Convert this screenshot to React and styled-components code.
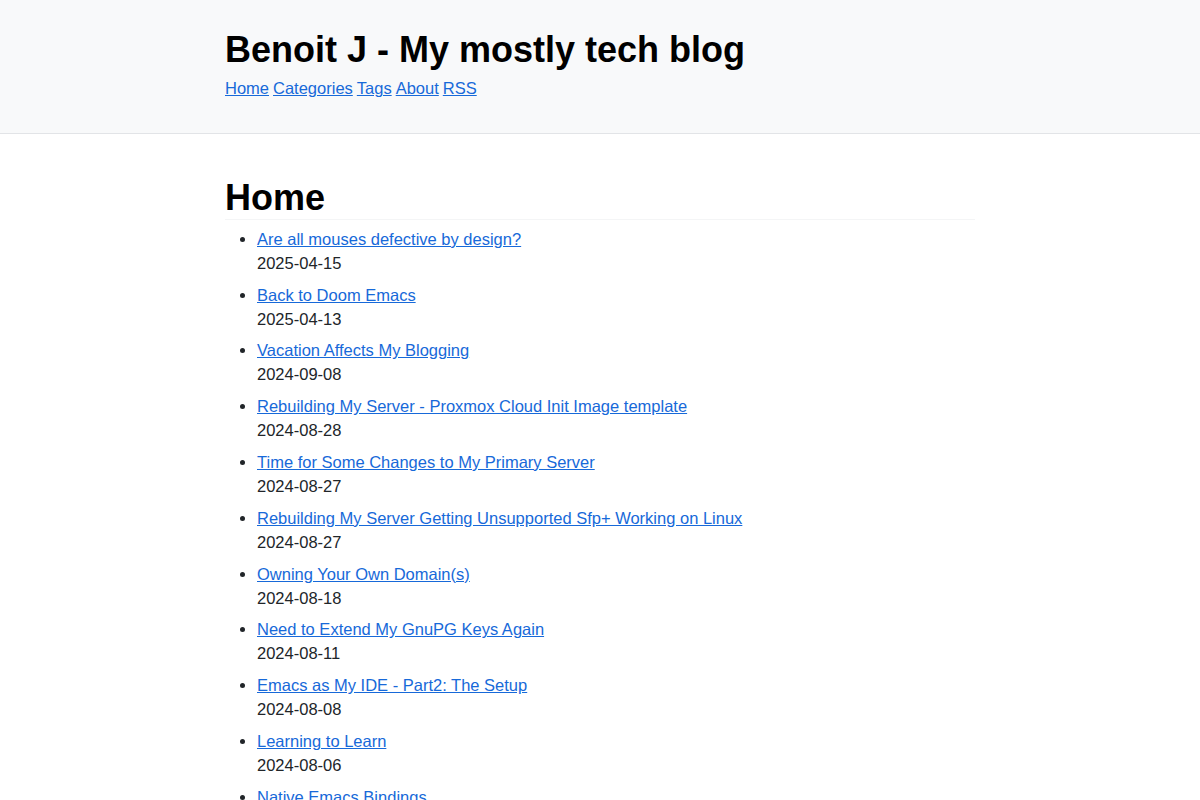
import React from "react";
import styled, { createGlobalStyle } from "styled-components";

const Global = createGlobalStyle`
  html, body { margin: 0; padding: 0; background: #fff; }
  body {
    font-family: "Liberation Sans", Arial, sans-serif;
    font-size: 16.5px;
    line-height: 24px;
    color: #212529;
  }
`;

const Header = styled.header`
  background: #f8f9fa;
  border-bottom: 1px solid #e2e4e7;
  padding: 29px 0 33px;
`;

const Container = styled.div`
  width: 750px;
  margin: 0 auto;
`;

const SiteTitle = styled.h1`
  margin: 0;
  font-size: 36px;
  line-height: 1.15;
  font-weight: 700;
  color: #000;
`;

const Nav = styled.nav`
  margin-top: 6px;
  display: flex;
  gap: 4px;
`;

const Link = styled.a`
  color: #1769d9;
  text-decoration: underline;
`;

const Main = styled.main`
  padding-top: 43px;
`;

const PageTitle = styled.h2`
  margin: 0;
  font-size: 36px;
  line-height: 1.15;
  font-weight: 700;
  color: #000;
  padding-bottom: 0;
  border-bottom: 1px solid #f4f5f6;
`;

const List = styled.ul`
  margin: 7px 0 0;
  padding-left: 32px;
`;

const Item = styled.li`
  margin-bottom: 7.8px;
`;

const Date = styled.div`
  color: #212529;
`;

const posts = [
  ["Are all mouses defective by design?", "2025-04-15"],
  ["Back to Doom Emacs", "2025-04-13"],
  ["Vacation Affects My Blogging", "2024-09-08"],
  ["Rebuilding My Server - Proxmox Cloud Init Image template", "2024-08-28"],
  ["Time for Some Changes to My Primary Server", "2024-08-27"],
  ["Rebuilding My Server Getting Unsupported Sfp+ Working on Linux", "2024-08-27"],
  ["Owning Your Own Domain(s)", "2024-08-18"],
  ["Need to Extend My GnuPG Keys Again", "2024-08-11"],
  ["Emacs as My IDE - Part2: The Setup", "2024-08-08"],
  ["Learning to Learn", "2024-08-06"],
  ["Native Emacs Bindings", "2024-08-02"],
  ["Emacs as My IDE - Part1", "2024-07-30"],
];

export default function App() {
  return (
    <>
      <Global />
      <Header>
        <Container>
          <SiteTitle>Benoit J - My mostly tech blog</SiteTitle>
          <Nav>
            {["Home", "Categories", "Tags", "About", "RSS"].map((n) => (
              <Link key={n} href="#">{n}</Link>
            ))}
          </Nav>
        </Container>
      </Header>
      <Main>
        <Container>
          <PageTitle>Home</PageTitle>
          <List>
            {posts.map(([t, d]) => (
              <Item key={t}>
                <Link href="#">{t}</Link>
                <Date>{d}</Date>
              </Item>
            ))}
          </List>
        </Container>
      </Main>
    </>
  );
}
